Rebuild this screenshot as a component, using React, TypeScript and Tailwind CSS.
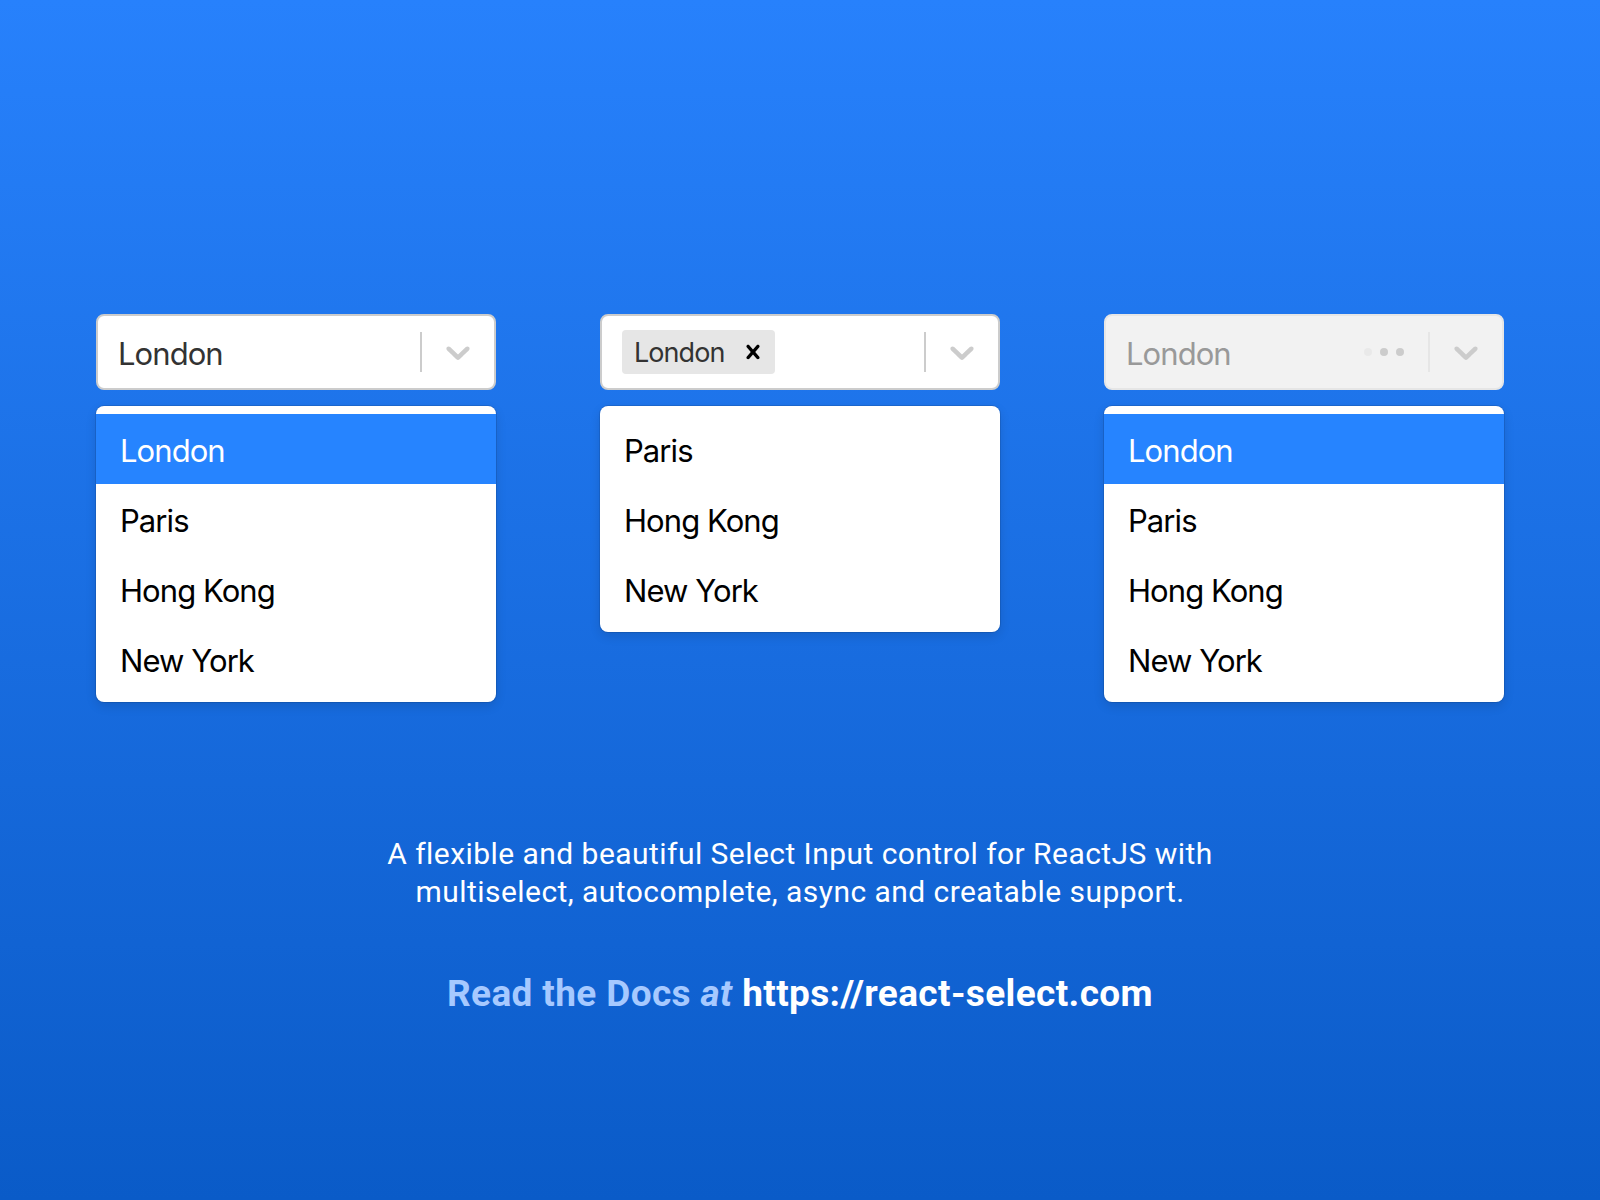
import type { ReactNode } from "react";

const cities = ["London", "Paris", "Hong Kong", "New York"];

// react-select style chevron, drawn at 2x
function Chevron() {
  return (
    <svg width="40" height="40" viewBox="0 0 20 20" className="fill-[#cccccc]">
      <path d="M4.516 7.548c0.436-0.446 1.043-0.481 1.576 0l3.908 3.747 3.908-3.747c0.533-0.481 1.141-0.446 1.574 0 0.436 0.445 0.408 1.197 0 1.615-0.406 0.418-4.695 4.502-4.695 4.502-0.217 0.223-0.502 0.335-0.787 0.335s-0.57-0.112-0.789-0.335c0 0-4.287-4.084-4.695-4.502s-0.436-1.170 0-1.615z" />
    </svg>
  );
}

function Cross() {
  return (
    <svg width="28" height="28" viewBox="0 0 20 20" className="fill-black">
      <path d="M14.348 14.849c-0.469 0.469-1.229 0.469-1.697 0l-2.651-3.030-2.651 3.029c-0.469 0.469-1.229 0.469-1.697 0-0.469-0.469-0.469-1.229 0-1.697l2.758-3.15-2.759-3.152c-0.469-0.469-0.469-1.228 0-1.697s1.228-0.469 1.697 0l2.652 3.031 2.651-3.031c0.469-0.469 1.228-0.469 1.697 0s0.469 1.229 0 1.697l-2.758 3.152 2.758 3.15c0.469 0.469 0.469 1.229 0 1.698z" />
    </svg>
  );
}

function Control({ children, disabled, extra }: { children: ReactNode; disabled?: boolean; extra?: ReactNode }) {
  return (
    <div
      className={
        disabled
          ? "flex h-[76px] items-center rounded-lg border-2 border-[#e6e6e6] bg-[#f2f2f2]"
          : "flex h-[76px] items-center rounded-lg border-2 border-[#cccccc] bg-white"
      }
    >
      <div className="flex flex-1 items-center px-4">{children}</div>
      {extra}
      <div className={disabled ? "h-10 w-[2px] bg-[#e6e6e6]" : "h-10 w-[2px] bg-[#cccccc]"} />
      <div className="px-4">
        <Chevron />
      </div>
    </div>
  );
}

function Menu({ items, active }: { items: string[]; active?: string }) {
  return (
    <div className="mt-4 overflow-hidden rounded-lg bg-white py-2 shadow-[0_0_0_1px_rgba(0,0,0,0.1),0_4px_11px_rgba(0,0,0,0.12)]">
      {items.map((c) => (
        <div
          key={c}
          className={
            c === active
              ? "flex h-[70px] items-center bg-[#2684ff] px-6 pt-1 text-white"
              : "flex h-[70px] items-center px-6 pt-1 text-black"
          }
        >
          {c}
        </div>
      ))}
    </div>
  );
}

export default function App() {
  return (
    <div className="flex min-h-[1200px] flex-col items-center bg-linear-to-b from-[#2781fc] to-[#0a5bc8] pt-[314px] font-['Inter','Liberation_Sans',sans-serif] text-[31px] tracking-[-0.03em]">
      {/* Three selects */}
      <div className="flex items-start gap-[104px]">
        <div className="w-[400px]">
          <Control>
            <span className="mx-1 pt-1 text-[#333333]">London</span>
          </Control>
          <Menu items={cities} active="London" />
        </div>

        <div className="w-[400px]">
          <Control>
            <div className="mx-1 flex h-11 items-center rounded bg-[#e6e6e6]">
              <span className="pt-[3px] pl-3 pr-[14px] text-[27px] text-[#333333]">London</span>
              <span className="pr-2">
                <Cross />
              </span>
            </div>
          </Control>
          <Menu items={cities.slice(1)} />
        </div>

        <div className="w-[400px]">
          <Control
            disabled
            extra={
              <div className="flex items-center gap-2 pr-6">
                <span className="h-2 w-2 rounded-full bg-[#e9e9e9]" />
                <span className="h-2 w-2 rounded-full bg-[#cccccc]" />
                <span className="h-2 w-2 rounded-full bg-[#cccccc]" />
              </div>
            }
          >
            <span className="mx-1 pt-1 text-[#999999]">London</span>
          </Control>
          <Menu items={cities} active="London" />
        </div>
      </div>

      {/* Tagline */}
      <p className="mt-[133px] text-center font-['Roboto','Open_Sans',sans-serif] text-[30px] leading-[38px] tracking-[0.015em] text-white">
        A flexible and beautiful Select Input control for ReactJS with
        <br />
        multiselect, autocomplete, async and creatable support.
      </p>

      <p className="mt-[60px] font-['Roboto','Liberation_Sans',sans-serif] text-[37px] leading-[46px] font-bold tracking-[0.01em]">
        <span className="text-[#a6c9ff]">
          Read the Docs <em>at</em>
        </span>{" "}
        <span className="text-white">https://react-select.com</span>
      </p>
    </div>
  );
}
